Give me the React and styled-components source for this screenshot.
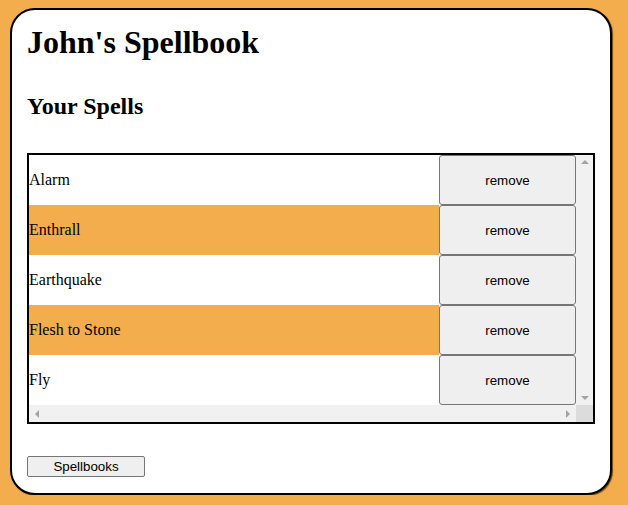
import React from "react";
import styled, { createGlobalStyle } from "styled-components";

const GlobalStyle = createGlobalStyle`
  html, body {
    margin: 0;
    padding: 0;
    background: #f4ad4c;
  }
  body {
    padding: 8px 0 0 10px;
    font-family: "Liberation Serif", "Times New Roman", serif;
  }
`;

const Card = styled.div`
  box-sizing: border-box;
  width: 602px;
  height: 487px;
  background: #fff;
  border: 2px solid #000;
  border-radius: 25px;
  box-shadow: 1px 1px 1px rgba(0, 0, 0, 0.6);
  padding: 0 15px;
  display: flex;
  flex-direction: column;
  align-items: flex-start;
`;

const Title = styled.h1`
  font-size: 32px;
  font-weight: bold;
  margin: 14px 0 0;
`;

const SubTitle = styled.h2`
  font-size: 24px;
  font-weight: bold;
  margin: 32px 0 0;
`;

const ListFrame = styled.div`
  margin-top: 33px;
  width: 568px;
  box-sizing: border-box;
  border: 2px solid #000;
  display: grid;
  grid-template-columns: 547px 17px;
  grid-template-rows: 250px 17px;
`;

const List = styled.div`
  display: flex;
  flex-direction: column;
  overflow: hidden;
`;

const Row = styled.div`
  display: flex;
  height: 50px;
  align-items: stretch;
`;

const Name = styled.div`
  flex: 1;
  display: flex;
  align-items: center;
  font-size: 16px;
  background: ${(p) => (p.$alt ? "#f4ad4c" : "#fff")};
`;

const RemoveButton = styled.button`
  width: 137px;
  height: 50px;
  box-sizing: border-box;
  background: #efefef;
  border: 1px solid #767676;
  border-radius: 3px;
  font-family: "Liberation Sans", Arial, sans-serif;
  font-size: 13.33px;
  color: #000;
  padding: 0;
`;

const VTrack = styled.div`
  background: #f1f1f1;
  display: flex;
  flex-direction: column;
  justify-content: space-between;
  align-items: center;
  padding: 5px 0;
`;

const HTrack = styled.div`
  background: #f1f1f1;
  display: flex;
  justify-content: space-between;
  align-items: center;
  padding: 0 6px;
`;

const Corner = styled.div`
  background: #dcdcdc;
`;

const Arrow = ({ dir }) => {
  const pts = {
    up: "0,4 4,0 8,4",
    down: "0,0 8,0 4,4",
    left: "4,0 4,8 0,4",
    right: "0,0 0,8 4,4",
  }[dir];
  const vert = dir === "up" || dir === "down";
  return (
    <svg width={vert ? 8 : 4} height={vert ? 4 : 8} viewBox={vert ? "0 0 8 4" : "0 0 4 8"}>
      <polygon points={pts} fill="#a3a3a3" />
    </svg>
  );
};

const FooterButton = styled.button`
  margin-top: 32px;
  width: 118px;
  height: 21px;
  box-sizing: border-box;
  background: #efefef;
  border: 1px solid #767676;
  border-radius: 2px;
  font-family: "Liberation Sans", Arial, sans-serif;
  font-size: 13.33px;
  color: #000;
  padding: 0;
`;

const spells = ["Alarm", "Enthrall", "Earthquake", "Flesh to Stone", "Fly"];

export default function App() {
  return (
    <>
      <GlobalStyle />
      <Card>
        <Title>John's Spellbook</Title>
        <SubTitle>Your Spells</SubTitle>
        <ListFrame>
          <List>
            {spells.map((s, i) => (
              <Row key={s}>
                <Name $alt={i % 2 === 1}>{s}</Name>
                <RemoveButton>remove</RemoveButton>
              </Row>
            ))}
          </List>
          <VTrack>
            <Arrow dir="up" />
            <Arrow dir="down" />
          </VTrack>
          <HTrack>
            <Arrow dir="left" />
            <Arrow dir="right" />
          </HTrack>
          <Corner />
        </ListFrame>
        <FooterButton>Spellbooks</FooterButton>
      </Card>
    </>
  );
}
